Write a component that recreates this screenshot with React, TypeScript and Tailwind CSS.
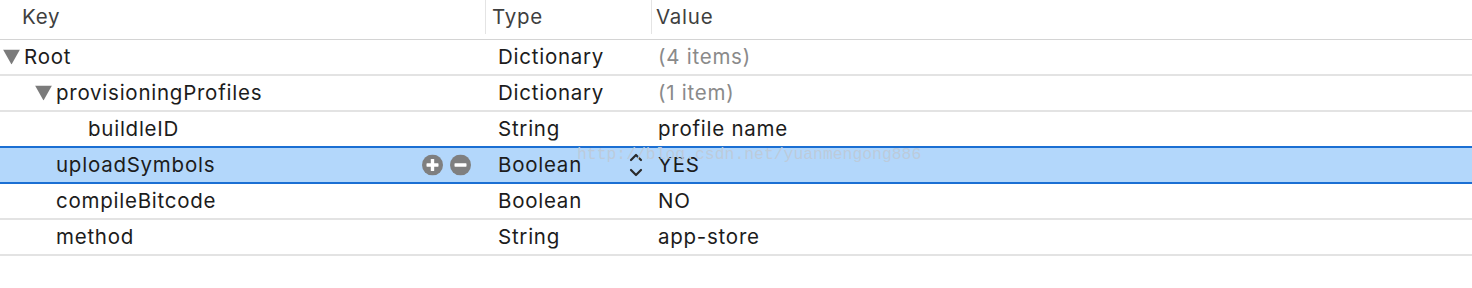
import React from 'react';

type Row = {
  key: string;
  indent: number;
  expandable?: boolean;
  type: string;
  value: string;
  muted?: boolean;
  selected?: boolean;
};

const rows: Row[] = [
  { key: 'Root', indent: 0, expandable: true, type: 'Dictionary', value: '(4 items)', muted: true },
  { key: 'provisioningProfiles', indent: 1, expandable: true, type: 'Dictionary', value: '(1 item)', muted: true },
  { key: 'buildleID', indent: 2, type: 'String', value: 'profile name' },
  { key: 'uploadSymbols', indent: 1, type: 'Boolean', value: 'YES', selected: true },
  { key: 'compileBitcode', indent: 1, type: 'Boolean', value: 'NO' },
  { key: 'method', indent: 1, type: 'String', value: 'app-store' },
];

const indentClass = ['pl-[24px]', 'pl-[56px]', 'pl-[88px]'];
const triangleClass = ['left-[3px]', 'left-[35px]', 'left-[67px]'];

function Triangle({ level }: { level: number }) {
  return (
    <svg
      className={`absolute top-1/2 -translate-y-1/2 ${triangleClass[level]}`}
      width="17"
      height="15"
      viewBox="0 0 17 15"
    >
      <path d="M0 0 H17 L8.5 15 Z" fill="#7b7b7b" />
    </svg>
  );
}

function RoundButton({ minus }: { minus?: boolean }) {
  return (
    <svg width="21" height="21" viewBox="0 0 21 21">
      <circle cx="10.5" cy="10.5" r="10.5" fill="#7f7f7f" />
      <rect x="4.5" y="8.8" width="12" height="3.4" rx="0.6" fill="#fff" />
      {!minus && <rect x="8.8" y="4.5" width="3.4" height="12" rx="0.6" fill="#fff" />}
    </svg>
  );
}

function Stepper() {
  return (
    <svg width="14" height="26" viewBox="0 0 14 26">
      <path d="M2 8 L7 3 L12 8" fill="none" stroke="#2b2b2b" strokeWidth="2.2" strokeLinecap="round" strokeLinejoin="round" />
      <path d="M2 18 L7 23 L12 18" fill="none" stroke="#2b2b2b" strokeWidth="2.2" strokeLinecap="round" strokeLinejoin="round" />
    </svg>
  );
}

export default function App() {
  return (
    <div className="relative w-[1472px] h-[288px] bg-white overflow-hidden font-['Inter','Liberation_Sans',sans-serif] text-[20.5px] tracking-[0.75px] text-[#1c1c1c]">
      {/* Header */}
      <div className="flex h-[40px] border-b border-[#d4d4d4] text-[#3f3f3f]">
        <div className="w-[485px] pl-[22px] pt-[2px]">Key</div>
        <div className="w-[166px] flex">
          <div className="w-px h-[34px] bg-[#e4e4e4]" />
          <div className="pl-[6px] pt-[2px]">Type</div>
        </div>
        <div className="flex-1 flex">
          <div className="w-px h-[34px] bg-[#e4e4e4]" />
          <div className="pl-[4px] pt-[2px]">Value</div>
        </div>
      </div>

      {/* Rows */}
      {rows.map((row, i) => {
        const nextSelected = rows[i + 1]?.selected;
        const borderColor = row.selected || nextSelected ? 'border-[#1b6fd3]' : 'border-[#e3e3e3]';
        return (
          <div
            key={row.key}
            className={`relative flex items-center h-[36px] border-b-2 ${borderColor} ${row.selected ? 'bg-[#b3d7fb]' : ''}`}
          >
            <div className={`relative w-[485px] h-full flex items-center ${indentClass[row.indent]}`}>
              {row.expandable && <Triangle level={row.indent} />}
              <span>{row.key}</span>
              {row.selected && (
                <div className="absolute right-[14px] top-1/2 -translate-y-1/2 flex gap-[7px]">
                  <RoundButton />
                  <RoundButton minus />
                </div>
              )}
            </div>
            <div className="relative w-[166px] pl-[13px]">
              {row.type}
              {row.selected && (
                <div className="absolute right-[8px] top-1/2 -translate-y-1/2 flex">
                  <Stepper />
                </div>
              )}
            </div>
            <div className={`flex-1 pl-[7px] ${row.muted ? 'text-[#8a8a8a]' : ''}`}>{row.value}</div>
          </div>
        );
      })}

      {/* Watermark */}
      <div className="absolute left-[577px] top-[143px] font-['Liberation_Mono',monospace] text-[16.4px] tracking-normal text-[#bccbdb]">
        http://blog.csdn.net/yuanmengong886
      </div>
    </div>
  );
}
